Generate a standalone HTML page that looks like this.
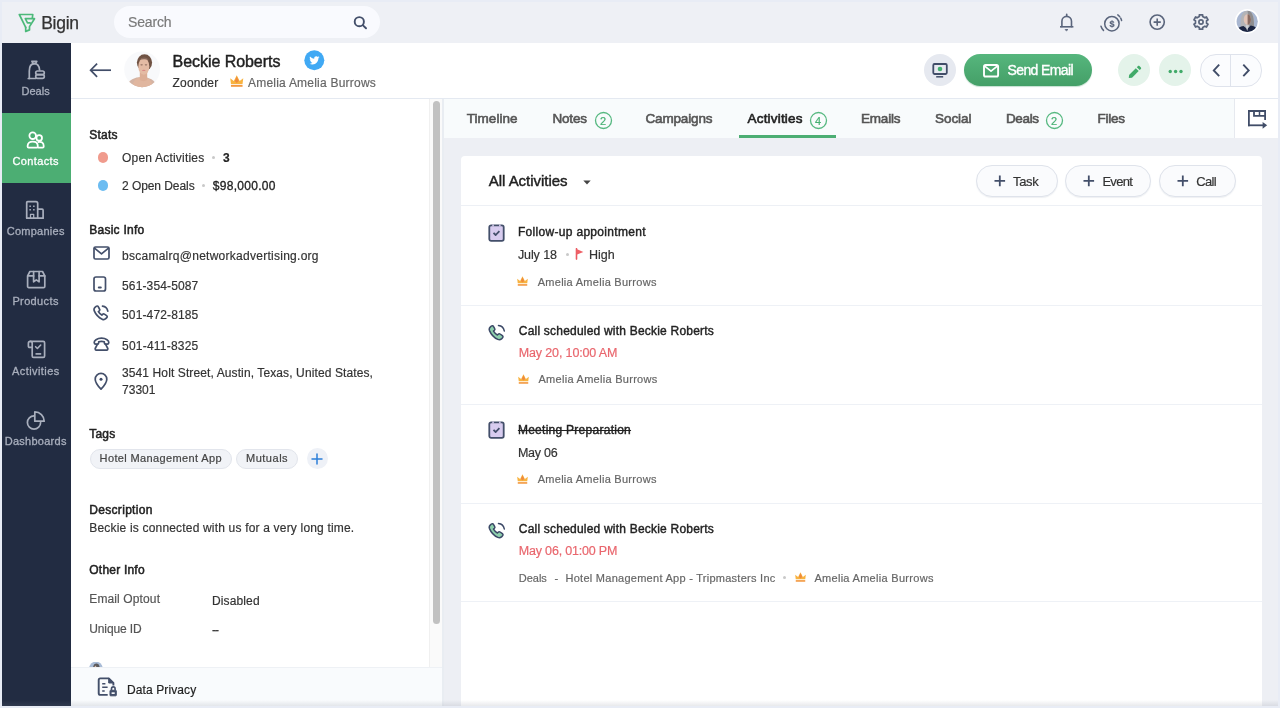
<!DOCTYPE html>
<html lang="en"><head><meta charset="utf-8"><title>Beckie Roberts - Bigin</title>
<style>
*{box-sizing:border-box;margin:0;padding:0}
html,body{width:1280px;height:708px;overflow:hidden}
body{background:#e8ecf5;font-family:"Liberation Sans",sans-serif;position:relative}
.a{position:absolute;display:block}
.t{position:absolute;white-space:nowrap;line-height:1;display:block}
#root{position:absolute;left:0;top:0;width:1280px;height:708px;will-change:transform}
</style></head><body><div id="root">
<div class="a" style="left:2px;top:2px;width:1276px;height:41px;background:#eef0f5"></div><svg class="a" style="left:17.500px;top:13px" width="18" height="20" viewBox="0 0 18 20" fill="none" stroke="#4cb97a" stroke-width="1.700" stroke-linejoin="round" stroke-linecap="round"><path d="M7.700 14.300L1.300 1.500h13.500l-.5 3.500"/><path d="M7.700 14.300v4.100l3.800-1.500v-3.300l5-7.900H7.300l2.200 4.200h2.600"/></svg><span class="t" id="t0" style="left:41.2px;top:15px;font-size:17.5px;font-weight:400;color:#333;letter-spacing:-0.280px;-webkit-text-stroke:0.25px #333;">Bigin</span><div class="a" style="left:114px;top:6px;width:266px;height:32px;border-radius:16px;background:#f9fafe"></div><span class="t" id="t1" style="left:128px;top:15px;font-size:14px;font-weight:400;color:#7a7a7a;letter-spacing:-0.172px;-webkit-text-stroke:0.18px #7a7a7a;">Search</span><svg class="a" style="left:352px;top:15px" width="16" height="16" viewBox="0 0 16 16" fill="none" stroke="#434f6a" stroke-width="1.900" stroke-linecap="round"><circle cx="7.300" cy="6.700" r="4.600"/><path d="M11 10.400l3 2.900"/></svg><svg class="a" style="left:1058px;top:13px" width="18" height="19" viewBox="0 0 18 19" fill="none" stroke="#5a657c" stroke-width="1.600" stroke-linecap="round" stroke-linejoin="round"><path d="M8.700 1.400v1.400"/><path d="M3.900 13.600V8.200a4.800 4.800 0 0 1 9.600 0v5.400"/><path d="M2 13.800h13.400" stroke-linecap="butt"/><path d="M7.600 16.600h2.200l-1.100 1z" fill="#5a657c" stroke-width="1"/></svg><svg class="a" style="left:1099px;top:11.500px" width="25" height="22" viewBox="0 0 25 22" fill="none" stroke="#5a657c" stroke-width="1.500" stroke-linecap="round" stroke-linejoin="round"><circle cx="12.900" cy="11.700" r="7.200"/><path d="M18.800 2.900c1.900 1.400 3.200 3.200 3.800 5.600" stroke-dasharray="2.600 1.800"/><path d="M2 14.200c.5 1.700 1.300 3 2.500 4.200"/></svg><span class="t" id="t2" style="left:1109.6px;top:20px;font-size:9px;font-weight:700;color:#5a657c;-webkit-text-stroke:0.18px #5a657c;">$</span><svg class="a" style="left:1148px;top:13px" width="18" height="18" viewBox="0 0 18 18" fill="none" stroke="#5a657c" stroke-width="1.600" stroke-linecap="butt"><circle cx="9.200" cy="9.100" r="7.100"/><path d="M9.200 5.500v7.200M5.600 9.100h7.200"/></svg><svg class="a" style="left:1191.700px;top:13.400px" width="18" height="18" viewBox="0 0 18 18" fill="none" stroke="#5a657c" stroke-width="1.700" stroke-linejoin="round"><path d="M10.66 1.79 L7.34 1.79 L7.33 3.55 L5.11 4.83 L3.59 3.95 L1.92 6.84 L3.45 7.72 L3.45 10.28 L1.92 11.16 L3.59 14.05 L5.11 13.17 L7.33 14.45 L7.34 16.21 L10.66 16.21 L10.67 14.45 L12.89 13.17 L14.41 14.05 L16.08 11.16 L14.55 10.28 L14.55 7.72 L16.08 6.84 L14.41 3.95 L12.89 4.83 L10.67 3.55Z"/><circle cx="9" cy="9" r="2.100"/></svg><svg class="a" style="left:1234px;top:8px" width="27" height="27" viewBox="0 0 27 27"><defs><clipPath id="cpu"><circle cx="13.200" cy="13.400" r="10.600"/></clipPath></defs><circle cx="13.200" cy="13.400" r="12.300" fill="#fff"/><g clip-path="url(#cpu)"><rect width="27" height="27" fill="#a8b6d0"/><path d="M6.800 22c-.8-8-.3-19 6.400-19.500 6.600-.3 7.400 10 6.600 19.500z" fill="#b4b4b6"/><path d="M13.500 2.500c5.800.3 7 9.500 6.300 19.500h-4z" fill="#8e8e90"/><path d="M9.800 10.500c.6-3 2-4.300 3.700-4.300 1.900 0 3.100 1.800 3.300 4.800.2 3-1.100 5.800-3.300 5.800s-4.100-2.800-3.700-6.300z" fill="#e2c4b6"/><path d="M13.600 6.200c1.900 0 3.100 1.800 3.300 4.800.2 3-1.100 5.800-3.300 5.800z" fill="#8a6c62"/><path d="M1 27c.5-6 4-8.600 8.500-9l3.700 3 3.500-3.400C21 18 25 21 25.500 27z" fill="#1c2642"/><path d="M11.600 17.200l1.600 6 1.500-6z" fill="#cfd2d6"/></g></svg><div class="a" style="left:2px;top:43px;width:69px;height:663px;background:#222c42"></div><div class="a" style="left:2px;top:43px;width:69px;height:70px;"></div><svg class="a" style="left:27px;top:60px" width="19" height="20" viewBox="0 0 19 20" fill="none" stroke="#a9afbd" stroke-width="1.7" stroke-linecap="round" stroke-linejoin="round"><path d="M4.9 1.3h4.900L8.500 3.700H6.200z"/><path d="M2.300 18.400V11c0-4.700 2.100-7.300 5.100-7.300 2.700 0 4.800 2.300 5.200 6.300"/><path d="M1.300 18.500h7.400"/><rect x="8.700" y="11" width="8.600" height="3.700" rx="1.850"/><rect x="8.700" y="14.700" width="8.600" height="3.700" rx="1.850"/></svg><span class="t" id="t3" style="left:21.4px;top:86px;font-size:11px;font-weight:400;color:#a9afbd;letter-spacing:0.044px;-webkit-text-stroke:0.3px #a9afbd;">Deals</span><div class="a" style="left:2px;top:113px;width:69px;height:70px;background:#4cae73;"></div><svg class="a" style="left:26px;top:131px" width="20" height="19" viewBox="0 0 20 19" fill="none" stroke="#ffffff" stroke-width="1.8" stroke-linecap="round" stroke-linejoin="round"><circle cx="13.200" cy="6.900" r="2.800"/><circle cx="6.700" cy="4.700" r="3.300" fill="#4cae73"/><path d="M12.600 11c2.800-.6 5.100.9 5.100 3.900v.7c0 .6-.4 1-1 1h-4.500"/><path d="M1.600 14.900c0-2.900 2.200-4.300 5.100-4.300s5.100 1.400 5.100 4.300v.7c0 .6-.4 1-1 1H2.600c-.6 0-1-.4-1-1z" fill="#4cae73"/></svg><span class="t" id="t4" style="left:12.5px;top:156px;font-size:11px;font-weight:400;color:#ffffff;letter-spacing:0.368px;-webkit-text-stroke:0.3px #ffffff;">Contacts</span><div class="a" style="left:2px;top:183px;width:69px;height:70px;"></div><svg class="a" style="left:25px;top:200px" width="20" height="20" viewBox="0 0 20 20" fill="none" stroke="#a9afbd" stroke-width="1.7" stroke-linecap="round" stroke-linejoin="round"><path d="M1.700 18.100V2.700c0-.6.400-1 1-1h8.300c1 0 1.700.7 1.700 1.700v14.700"/><path d="M12.700 9.200h4.400c.6 0 1 .4 1 1v7.900"/><path d="M1.700 18.100h16.400"/><path d="M5.500 18v-3.700h3.200V18" stroke-width="1.300"/><path d="M4.400 5.400h1.500v1.500H4.400zM8.100 5.400h1.500v1.500H8.100zM4.400 9h1.500v1.500H4.400zM8.100 9h1.500v1.500H8.100z" fill="#a9afbd" stroke="none"/></svg><span class="t" id="t5" style="left:6.8px;top:226px;font-size:11px;font-weight:400;color:#a9afbd;letter-spacing:0.245px;-webkit-text-stroke:0.3px #a9afbd;">Companies</span><div class="a" style="left:2px;top:253px;width:69px;height:70px;"></div><svg class="a" style="left:26px;top:269.5px" width="20" height="19" viewBox="0 0 20 19" fill="none" stroke="#a9afbd" stroke-width="1.7" stroke-linecap="round" stroke-linejoin="round"><path d="M1.600 5.900L3.900 1.500h12.600l2.300 4.400v10.500c0 .7-.5 1.200-1.200 1.200H2.800c-.7 0-1.200-.5-1.200-1.200z"/><path d="M1.800 5.900h5.800M13.100 5.900h5.600"/><path d="M7.600 1.700v10.100l2.700-1.900 2.800 1.900V1.700"/></svg><span class="t" id="t6" style="left:12.4px;top:296px;font-size:11px;font-weight:400;color:#a9afbd;letter-spacing:0.368px;-webkit-text-stroke:0.3px #a9afbd;">Products</span><div class="a" style="left:2px;top:323px;width:69px;height:70px;"></div><svg class="a" style="left:27px;top:340px" width="19" height="19" viewBox="0 0 19 19" fill="none" stroke="#a9afbd" stroke-width="1.7" stroke-linecap="round" stroke-linejoin="round"><path d="M3.200 1.400h13c.8 0 1.400.6 1.400 1.400V16c0 .8-.6 1.400-1.400 1.400H6.600c-.8 0-1.400-.6-1.400-1.400V7.400"/><path d="M3.300 1.400c1.100 0 1.900.8 1.900 1.900v4.100H2.600c-.7 0-1.200-.5-1.200-1.200V3.200c0-1 .8-1.800 1.900-1.800z"/><path d="M8.600 6.700l1.800 1.800L13.700 5" stroke-width="1.600"/><path d="M8.500 13.900h5.700" stroke-width="1.700" stroke-linecap="butt"/></svg><span class="t" id="t7" style="left:12px;top:366px;font-size:11px;font-weight:400;color:#a9afbd;letter-spacing:0.422px;-webkit-text-stroke:0.3px #a9afbd;">Activities</span><div class="a" style="left:2px;top:393px;width:69px;height:70px;"></div><svg class="a" style="left:26px;top:411px" width="20" height="20" viewBox="0 0 20 20" fill="none" stroke="#a9afbd" stroke-width="1.7" stroke-linecap="round" stroke-linejoin="round"><path d="M8 4.900A6.600 6.600 0 1 0 14.600 11.500"/><path d="M8.800 0.900V10.200H18.200A9.400 9.400 0 0 0 8.800 0.900z"/></svg><span class="t" id="t8" style="left:4.8px;top:436px;font-size:11px;font-weight:400;color:#a9afbd;letter-spacing:0.252px;-webkit-text-stroke:0.3px #a9afbd;">Dashboards</span><div class="a" style="left:71px;top:43px;width:1207px;height:56px;background:#fff;border-bottom:1px solid #e4e9f1"></div><svg class="a" style="left:89px;top:62px" width="24" height="16" viewBox="0 0 24 16" fill="none" stroke="#414d68" stroke-width="1.700" stroke-linecap="butt" stroke-linejoin="miter"><path d="M2 8.200h20"/><path d="M8.100 1.600L1.600 8.200l6.500 6.600"/></svg><svg class="a" style="left:124px;top:51px" width="37" height="37" viewBox="0 0 37 37"><defs><clipPath id="cpa"><circle cx="18.100" cy="18.300" r="17.900"/></clipPath></defs><circle cx="18.100" cy="18.300" r="17.900" fill="#f8f9fb"/><g clip-path="url(#cpa)"><ellipse cx="17.800" cy="34" rx="13.600" ry="8" fill="#d3b3a3"/><ellipse cx="18.500" cy="33.500" rx="9.500" ry="7.500" fill="#e0b69f"/><path d="M15.800 21h7.400v8c-2.500 1.500-5 1.500-7.400 0z" fill="#dcae96"/><ellipse cx="20.500" cy="11.600" rx="7.600" ry="8.400" fill="#6f5243"/><ellipse cx="19.800" cy="15.400" rx="5.500" ry="8.300" fill="#e4bba4"/><path d="M15 9.500c1.200-2 3-3 5.200-3 2.200 0 3.800 1 4.800 3-1.600-.8-3.200-1.200-4.900-1.200-1.800 0-3.500.4-5.100 1.200z" fill="#87685a"/><ellipse cx="17.600" cy="13.800" rx="1.300" ry=".6" fill="#8d6b5d"/><ellipse cx="22" cy="13.800" rx="1.300" ry=".6" fill="#8d6b5d"/><ellipse cx="19.800" cy="19.400" rx="1.700" ry=".7" fill="#d98a86"/></g></svg><span class="t" id="t9" style="left:172.6px;top:54px;font-size:16px;font-weight:400;color:#1f1f1f;letter-spacing:-0.054px;-webkit-text-stroke:0.45px #1f1f1f;">Beckie Roberts</span><svg class="a" style="left:303.700px;top:50.400px" width="21" height="21" viewBox="0 0 21 21"><circle cx="10.300" cy="10.200" r="10" fill="#40a9f4"/><path transform="translate(0.900 0.700) scale(0.910)" d="M16 7.100c-.4.200-.9.300-1.300.4.500-.3.800-.7 1-1.300-.4.300-.9.400-1.500.6-.4-.5-1-.7-1.700-.7-1.300 0-2.300 1-2.300 2.300 0 .2 0 .4.100.5-1.900-.1-3.600-1-4.700-2.400-.2.300-.3.700-.3 1.200 0 .8.400 1.500 1 1.900-.4 0-.7-.1-1-.3 0 1.100.8 2 1.800 2.300-.3.100-.7.100-1 0 .3.900 1.100 1.600 2.100 1.600-1 .8-2.100 1.100-3.400 1 1 .7 2.200 1 3.500 1 4.200 0 6.500-3.500 6.500-6.500v-.3c.5-.3.900-.7 1.200-1.300z" fill="#fff"/></svg><span class="t" id="t10" style="left:172.6px;top:77px;font-size:12px;font-weight:400;color:#333;letter-spacing:0.149px;-webkit-text-stroke:0.18px #333;">Zoonder</span><svg class="a" style="left:230px;top:75px" width="13.5" height="12" viewBox="0 0 13 11.600"><path d="M0.900 8.600L0.200 3.100 3.700 5.700 6.500 0.200 9.300 5.700 12.800 3.100 12.100 8.600z" fill="#f8b340"/><path d="M6.500 1.400L8.500 5.700 6.500 7.700 4.500 5.700z" fill="#ef8b3c"/><rect x="0.900" y="9.500" width="11.200" height="1.900" fill="#f3983f"/></svg><span class="t" id="t11" style="left:248px;top:77px;font-size:12px;font-weight:400;color:#666;letter-spacing:0.221px;-webkit-text-stroke:0.18px #666;">Amelia Amelia Burrows</span><div class="a" style="left:923.800px;top:54.200px;width:32px;height:32px;border-radius:16px;background:#e6e9f0"></div><svg class="a" style="left:931px;top:62px" width="18" height="17" viewBox="0 0 18 17" fill="none" stroke="#414d68" stroke-width="1.800"><rect x="2.300" y="2" width="13.500" height="10" rx="1.200"/><path d="M5.200 14.800h7"  stroke-width="1.500"/><circle cx="9" cy="7" r="2.300" fill="#43b06f" stroke="none"/></svg><div class="a" style="left:964px;top:54px;width:128px;height:32px;border-radius:16px;background:linear-gradient(#56b67d,#449f67);box-shadow:0 1px 1px rgba(60,150,100,.3)"></div><svg class="a" style="left:982px;top:63px" width="18" height="16" viewBox="0 0 18 16" fill="none" stroke="#fff" stroke-width="1.900" stroke-linejoin="round" stroke-linecap="round"><rect x="2" y="2" width="14.100" height="11.500" rx="1.600"/><path d="M3 3.400L9 8.200l6-4.800" stroke-width="1.700"/></svg><span class="t" id="t12" style="left:1007.5px;top:63px;font-size:14px;font-weight:400;color:#fff;letter-spacing:-0.610px;-webkit-text-stroke:0.35px #fff;">Send Email</span><div class="a" style="left:1118px;top:54.200px;width:32px;height:32px;border-radius:16px;background:#e4f3ea"></div><svg class="a" style="left:1128px;top:65px" width="14" height="14" viewBox="0 0 14 14"><path d="M0.800 12.900l.3-3 6.700-6.700 2.900 2.900-6.700 6.700z" fill="#41aa69"/><path d="M8.800 2.200l1.200-1.200c.4-.4 1-.4 1.400 0l1.500 1.500c.4.400.4 1 0 1.400l-1.200 1.200z" fill="#41aa69"/></svg><div class="a" style="left:1159px;top:54.200px;width:32px;height:32px;border-radius:16px;background:#e4f3ea"></div><svg class="a" style="left:1167px;top:69px" width="17" height="5" viewBox="0 0 17 5" fill="#41aa69"><circle cx="3.250" cy="2.500" r="1.700"/><circle cx="8.600" cy="2.500" r="1.700"/><circle cx="14" cy="2.500" r="1.700"/></svg><div class="a" style="left:1200px;top:54px;width:62px;height:32.500px;border-radius:16px;background:#fbfcfe;border:1px solid #dfe3ec"></div><div class="a" style="left:1230px;top:55px;width:1px;height:30.500px;background:#dfe3ec"></div><svg class="a" style="left:1211px;top:63px" width="10" height="15" viewBox="0 0 10 15" fill="none" stroke="#414d68" stroke-width="1.900" stroke-linecap="butt" stroke-linejoin="miter"><path d="M8.200 1.700L2.800 7.400l5.400 5.700"/></svg><svg class="a" style="left:1241px;top:63px" width="10" height="15" viewBox="0 0 10 15" fill="none" stroke="#414d68" stroke-width="1.900" stroke-linecap="butt" stroke-linejoin="miter"><path d="M2.300 1.700L7.700 7.400l-5.400 5.700"/></svg><div class="a" style="left:71px;top:99px;width:358px;height:607px;background:#fff"></div><div class="a" style="left:429px;top:99px;width:13px;height:607px;background:#fafafa;border-left:1px solid #f0f0f0"></div><div class="a" style="left:433px;top:101px;width:7px;height:523px;border-radius:4px;background:#c1c1c1"></div><div class="a" style="left:442px;top:99px;width:2px;height:607px;background:#e9edf2"></div><span class="t" id="t13" style="left:89.3px;top:129px;font-size:12px;font-weight:400;color:#222;letter-spacing:0.210px;-webkit-text-stroke:0.5px #222;">Stats</span><div class="a" style="left:97.600px;top:152.300px;width:10.500px;height:10.500px;border-radius:50%;background:#f09b8d"></div><span class="t" id="t14" style="left:122px;top:152px;font-size:12px;font-weight:400;color:#333;letter-spacing:0.202px;-webkit-text-stroke:0.18px #333;">Open Activities</span><div class="a" style="left:212px;top:155.800px;width:3px;height:3px;border-radius:50%;background:#c9c9c9"></div><span class="t" id="t15" style="left:223px;top:152px;font-size:12px;font-weight:700;color:#222;letter-spacing:-0.287px;-webkit-text-stroke:0.18px #222;">3</span><div class="a" style="left:97.600px;top:180px;width:10.500px;height:10.500px;border-radius:50%;background:#6cbcf1"></div><span class="t" id="t16" style="left:122px;top:180px;font-size:12px;font-weight:400;color:#333;letter-spacing:-0.063px;-webkit-text-stroke:0.18px #333;">2 Open Deals</span><div class="a" style="left:202px;top:184px;width:3px;height:3px;border-radius:50%;background:#c9c9c9"></div><span class="t" id="t17" style="left:212.8px;top:180px;font-size:12px;font-weight:400;color:#222;letter-spacing:0.293px;-webkit-text-stroke:0.3px #222;">$98,000.00</span><span class="t" id="t18" style="left:89.3px;top:224px;font-size:12px;font-weight:400;color:#222;letter-spacing:0.244px;-webkit-text-stroke:0.5px #222;">Basic Info</span><svg class="a" style="left:92.5px;top:246px" width="17" height="14" viewBox="0 0 17 14" fill="none" stroke="#434f6a" stroke-width="1.7" stroke-linecap="round" stroke-linejoin="round"><rect x="1" y="1" width="15" height="12" rx="1.500"/><path d="M1.500 2.200L8.500 7.800l7-5.600"/></svg><span class="t" id="t19" style="left:122px;top:250px;font-size:12px;font-weight:400;color:#333;letter-spacing:0.266px;-webkit-text-stroke:0.18px #333;">bscamalrq@networkadvertising.org</span><svg class="a" style="left:92.5px;top:276px" width="14" height="16" viewBox="0 0 14 16" fill="none" stroke="#434f6a" stroke-width="1.7" stroke-linecap="round" stroke-linejoin="round"><rect x="1" y="1" width="11.500" height="14" rx="2"/><path d="M5.800 11.600h2" stroke-width="2"/></svg><span class="t" id="t20" style="left:122px;top:280px;font-size:12px;font-weight:400;color:#333;letter-spacing:0.142px;-webkit-text-stroke:0.18px #333;">561-354-5087</span><svg class="a" style="left:92.5px;top:305px" width="17" height="16" viewBox="0 0 17 16" fill="none" stroke="#434f6a" stroke-width="1.7" stroke-linecap="round" stroke-linejoin="round"><path d="M5.200 1.600c-.5-.7-1.400-.8-2-.3L2 2.400C1 3.300.8 4.600 1.300 5.900c1.500 3.700 4.300 6.600 7.900 8.300 1.200.6 2.600.4 3.500-.5l1.100-1.100c.6-.6.500-1.500-.2-2l-2.200-1.500c-.6-.4-1.300-.300-1.800.2l-.8.800C7.400 9.300 6.200 8 5.400 6.600l.9-.8c.5-.5.600-1.200.2-1.800z"/><path d="M9.500 1.200c2.700.3 4.800 2.300 5.300 5"/></svg><span class="t" id="t21" style="left:122px;top:309px;font-size:12px;font-weight:400;color:#333;letter-spacing:0.142px;-webkit-text-stroke:0.18px #333;">501-472-8185</span><svg class="a" style="left:92.5px;top:336.5px" width="17" height="14.5" viewBox="0 0 17 14.500" fill="none" stroke="#434f6a" stroke-width="1.7" stroke-linecap="round" stroke-linejoin="round"><path d="M1.200 5.600C1 3.800 3.800 1.200 8.500 1.200s7.500 2.600 7.300 4.400c-.1.900-.7 1.500-1.500 1.500h-1.600c-.8 0-1.400-.6-1.400-1.400v-1c-1.800-.5-3.800-.5-5.600 0v1c0 .8-.6 1.400-1.400 1.400H2.700c-.8 0-1.400-.6-1.500-1.500z"/><path d="M4.500 7.200L2.200 11.500v.5c0 .7.500 1.200 1.200 1.200h10.200c.7 0 1.200-.5 1.200-1.200v-.5L12.500 7.200"/></svg><span class="t" id="t22" style="left:122px;top:340px;font-size:12px;font-weight:400;color:#333;letter-spacing:0.223px;-webkit-text-stroke:0.18px #333;">501-411-8325</span><svg class="a" style="left:93.5px;top:371.5px" width="14" height="18.5" viewBox="0 0 14 18.500" fill="none" stroke="#434f6a" stroke-width="1.7" stroke-linecap="round" stroke-linejoin="round"><path d="M7 17.200C3.500 13.500 1.200 10.300 1.200 7.200a5.800 5.800 0 0 1 11.600 0c0 3.100-2.300 6.300-5.800 10z"/><circle cx="7" cy="7.200" r="1.500" fill="#3b4866" stroke="none"/></svg><span class="t" id="t23" style="left:122px;top:367px;font-size:12px;font-weight:400;color:#333;letter-spacing:0.108px;-webkit-text-stroke:0.18px #333;">3541 Holt Street, Austin, Texas, United States,</span><span class="t" id="t24" style="left:122px;top:384px;font-size:12px;font-weight:400;color:#333;letter-spacing:0.031px;-webkit-text-stroke:0.18px #333;">73301</span><span class="t" id="t25" style="left:89.3px;top:428px;font-size:12px;font-weight:400;color:#222;letter-spacing:0.180px;-webkit-text-stroke:0.5px #222;">Tags</span><div class="a" style="left:89.700px;top:449px;width:142.200px;height:19.500px;border-radius:10px;background:#f1f3f7;border:1px solid #e2e5ec"></div><span class="t" id="t26" style="left:99.6px;top:453px;font-size:11px;font-weight:400;color:#444;letter-spacing:0.370px;-webkit-text-stroke:0.2px #444;">Hotel Management App</span><div class="a" style="left:236.200px;top:449px;width:62px;height:19.500px;border-radius:10px;background:#f1f3f7;border:1px solid #e2e5ec"></div><span class="t" id="t27" style="left:246px;top:453px;font-size:11px;font-weight:400;color:#444;letter-spacing:0.511px;-webkit-text-stroke:0.2px #444;">Mutuals</span><div class="a" style="left:306.500px;top:448px;width:21px;height:21px;border-radius:50%;background:#eef1f7"></div><svg class="a" style="left:311px;top:452.500px" width="12" height="12" viewBox="0 0 12 12" fill="none" stroke="#2d7fd9" stroke-width="1.500" stroke-linecap="round"><path d="M6 1v10M1 6h10"/></svg><span class="t" id="t28" style="left:89.3px;top:504px;font-size:12px;font-weight:400;color:#222;letter-spacing:0.307px;-webkit-text-stroke:0.5px #222;">Description</span><span class="t" id="t29" style="left:89.3px;top:522px;font-size:12px;font-weight:400;color:#333;letter-spacing:0.183px;-webkit-text-stroke:0.18px #333;">Beckie is connected with us for a very long time.</span><span class="t" id="t30" style="left:89.3px;top:564px;font-size:12px;font-weight:400;color:#222;letter-spacing:0.214px;-webkit-text-stroke:0.5px #222;">Other Info</span><span class="t" id="t31" style="left:89.3px;top:593px;font-size:12px;font-weight:400;color:#555;letter-spacing:0.120px;-webkit-text-stroke:0.18px #555;">Email Optout</span><span class="t" id="t32" style="left:212px;top:595px;font-size:12px;font-weight:400;color:#333;letter-spacing:0.128px;-webkit-text-stroke:0.18px #333;">Disabled</span><span class="t" id="t33" style="left:89.3px;top:623px;font-size:12px;font-weight:400;color:#555;letter-spacing:-0.134px;-webkit-text-stroke:0.18px #555;">Unique ID</span><span class="t" id="t34" style="left:212px;top:624px;font-size:12px;font-weight:400;color:#333;letter-spacing:-1.000px;-webkit-text-stroke:0.18px #333;">--</span><svg class="a" style="left:87px;top:662px" width="18" height="5" viewBox="0 0 18 6"><path d="M0.800 6.500a8.200 8.200 0 0 1 16.200 0z" fill="#a9bcd7"/><path d="M5.500 6.500c.3-3 2-4.600 4-4.600s3.600 1.600 3.900 4.600z" fill="#5c5a5c"/><path d="M7 6.500c.2-1.200 1-2 2.200-2v2z" fill="#d9b8a8"/></svg><div class="a" style="left:71px;top:667px;width:371px;height:39px;background:#f9fbfd;border-top:1px solid #eef1f5"></div><svg class="a" style="left:95.700px;top:676px" width="22" height="22" viewBox="0 0 22 22" fill="none" stroke="#434f6a" stroke-width="1.900" stroke-linejoin="round"><path d="M11.700 18.900H4.300c-.9 0-1.600-.7-1.600-1.600V4c0-.9.700-1.600 1.600-1.600h8.500l4.600 4.500v2.500"/><path d="M12.700 2.400l4.700 4.600h-4.700z" fill="#434f6a" stroke-width="1"/><path d="M6.200 7.700h3.200M6.200 11.200h5.400M6.200 15h2.500" stroke-width="1.500"/><rect x="14" y="14.300" width="6.300" height="5.500" rx=".6" fill="#434f6a" stroke-width="1"/><path d="M15.500 14v-1.300a1.800 1.800 0 0 1 3.600 0V14" stroke-width="1.600"/><rect x="15.600" y="16.300" width="3.100" height="1.700" fill="#f4f6f9" stroke="none"/></svg><span class="t" id="t35" style="left:127px;top:684px;font-size:12px;font-weight:400;color:#222;letter-spacing:0.106px;-webkit-text-stroke:0.18px #222;">Data Privacy</span><div class="a" style="left:444px;top:99px;width:834px;height:39px;background:#f8fbfc"></div><div class="a" style="left:444px;top:138px;width:834px;height:568px;background:#edeff4"></div><span class="t" id="t36" style="left:466.8px;top:112px;font-size:13.5px;font-weight:400;color:#555;letter-spacing:0.026px;-webkit-text-stroke:0.6px #555;">Timeline</span><span class="t" id="t37" style="left:552.5px;top:112px;font-size:13.5px;font-weight:400;color:#555;letter-spacing:-0.195px;-webkit-text-stroke:0.6px #555;">Notes</span><svg class="a" style="left:593.5px;top:110.800px" width="19" height="19" viewBox="0 0 19 19"><circle cx="9.500" cy="9.500" r="8" fill="none" stroke="#57b981" stroke-width="1.300"/></svg><span class="t" id="t38" style="left:600px;top:116px;font-size:11px;font-weight:400;color:#46b072;letter-spacing:0.075px;-webkit-text-stroke:0.2px #46b072;">2</span><span class="t" id="t39" style="left:645.5px;top:112px;font-size:13.5px;font-weight:400;color:#555;letter-spacing:-0.162px;-webkit-text-stroke:0.6px #555;">Campaigns</span><span class="t" id="t40" style="left:747.5px;top:112px;font-size:13.5px;font-weight:400;color:#222;letter-spacing:0.193px;-webkit-text-stroke:0.6px #222;">Activities</span><svg class="a" style="left:808.5px;top:110.800px" width="19" height="19" viewBox="0 0 19 19"><circle cx="9.500" cy="9.500" r="8" fill="none" stroke="#57b981" stroke-width="1.300"/></svg><span class="t" id="t41" style="left:815px;top:116px;font-size:11px;font-weight:400;color:#46b072;letter-spacing:0.075px;-webkit-text-stroke:0.2px #46b072;">4</span><div class="a" style="left:739px;top:135px;width:96.500px;height:3px;background:#4cae73"></div><span class="t" id="t42" style="left:861px;top:112px;font-size:13.5px;font-weight:400;color:#555;letter-spacing:-0.203px;-webkit-text-stroke:0.6px #555;">Emails</span><span class="t" id="t43" style="left:935px;top:112px;font-size:13.5px;font-weight:400;color:#555;letter-spacing:-0.056px;-webkit-text-stroke:0.6px #555;">Social</span><span class="t" id="t44" style="left:1006px;top:112px;font-size:13.5px;font-weight:400;color:#555;letter-spacing:-0.379px;-webkit-text-stroke:0.6px #555;">Deals</span><svg class="a" style="left:1044.5px;top:110.800px" width="19" height="19" viewBox="0 0 19 19"><circle cx="9.500" cy="9.500" r="8" fill="none" stroke="#57b981" stroke-width="1.300"/></svg><span class="t" id="t45" style="left:1051px;top:116px;font-size:11px;font-weight:400;color:#46b072;letter-spacing:0.075px;-webkit-text-stroke:0.2px #46b072;">2</span><span class="t" id="t46" style="left:1097.5px;top:112px;font-size:13.5px;font-weight:400;color:#555;letter-spacing:-0.254px;-webkit-text-stroke:0.6px #555;">Files</span><div class="a" style="left:1234px;top:99px;width:44px;height:39px;background:#fff;border-left:1px solid #e6e9ef"></div><svg class="a" style="left:1247px;top:109px" width="21" height="21" viewBox="0 0 21 21" fill="none" stroke="#414d68" stroke-width="1.800" stroke-linejoin="miter" stroke-linecap="butt"><path d="M1.900 17.200V2h16.200v9"/><path d="M7 2v4.800h11"/><path d="M12.500 2v4.800" stroke-width="1.500"/><path d="M1 16.300h15"/><path d="M15.600 12.900l4.600 3.400-4.600 3.400z" fill="#414d68" stroke="none"/></svg><div class="a" style="left:461px;top:156px;width:801px;height:550px;background:#fff;border-radius:4px 4px 0 0"></div><span class="t" id="t47" style="left:488.8px;top:173px;font-size:15px;font-weight:400;color:#222;letter-spacing:-0.039px;-webkit-text-stroke:0.45px #222;">All Activities</span><svg class="a" style="left:583px;top:180px" width="8" height="5" viewBox="0 0 8 5"><path d="M0.300 0.500h7.400L4 4.500z" fill="#444"/></svg><div class="a" style="left:976px;top:164.500px;width:81.5px;height:32px;border-radius:16px;background:#fafbfd;border:1px solid #dfe3eb;box-shadow:0 1px 1px rgba(200,205,215,.3)"></div><svg class="a" style="left:994px;top:175px" width="12" height="12" viewBox="0 0 12 12" fill="none" stroke="#434f6a" stroke-width="1.800" stroke-linecap="butt"><path d="M5.800 0.600v10.600M0.500 5.900h10.600"/></svg><span class="t" id="t48" style="left:1013px;top:175px;font-size:13px;font-weight:400;color:#333;letter-spacing:-0.311px;-webkit-text-stroke:0.18px #333;">Task</span><div class="a" style="left:1065px;top:164.500px;width:86px;height:32px;border-radius:16px;background:#fafbfd;border:1px solid #dfe3eb;box-shadow:0 1px 1px rgba(200,205,215,.3)"></div><svg class="a" style="left:1083px;top:175px" width="12" height="12" viewBox="0 0 12 12" fill="none" stroke="#434f6a" stroke-width="1.800" stroke-linecap="butt"><path d="M5.800 0.600v10.600M0.500 5.900h10.600"/></svg><span class="t" id="t49" style="left:1102.4px;top:175px;font-size:13px;font-weight:400;color:#333;letter-spacing:-0.713px;-webkit-text-stroke:0.18px #333;">Event</span><div class="a" style="left:1159px;top:164.500px;width:76.5px;height:32px;border-radius:16px;background:#fafbfd;border:1px solid #dfe3eb;box-shadow:0 1px 1px rgba(200,205,215,.3)"></div><svg class="a" style="left:1177px;top:175px" width="12" height="12" viewBox="0 0 12 12" fill="none" stroke="#434f6a" stroke-width="1.800" stroke-linecap="butt"><path d="M5.800 0.600v10.600M0.500 5.900h10.600"/></svg><span class="t" id="t50" style="left:1196.2px;top:175px;font-size:13px;font-weight:400;color:#333;letter-spacing:-0.669px;-webkit-text-stroke:0.18px #333;">Call</span><div class="a" style="left:461px;top:205px;width:801px;height:1px;background:#edf0f5"></div><div class="a" style="left:461px;top:305px;width:801px;height:1px;background:#eef1f6"></div><div class="a" style="left:461px;top:404px;width:801px;height:1px;background:#eef1f6"></div><div class="a" style="left:461px;top:503px;width:801px;height:1px;background:#eef1f6"></div><div class="a" style="left:461px;top:601px;width:801px;height:1px;background:#eef1f6"></div><svg class="a" style="left:487.9px;top:223.6px" width="18" height="19" viewBox="0 0 18 19"><rect x="1.300" y="1.400" width="14.400" height="15.500" rx="1.800" fill="#d8ccef" stroke="#434f6a" stroke-width="1.800"/><path d="M4.300 1.400h1.500M11.100 1.400h1.500" stroke="#d8ccef" stroke-width="2"/><path d="M5.500 8.800l2.200 2.200 3.700-3.900" fill="none" stroke="#434f6a" stroke-width="1.800" stroke-linejoin="round"/></svg><span class="t" id="t51" style="left:517.9px;top:226px;font-size:12px;font-weight:400;color:#222;letter-spacing:0.315px;-webkit-text-stroke:0.4px #222;">Follow-up appointment</span><span class="t" id="t52" style="left:517.9px;top:249px;font-size:12.5px;font-weight:400;color:#333;letter-spacing:-0.085px;-webkit-text-stroke:0.18px #333;">July 18</span><div class="a" style="left:565.500px;top:252.600px;width:3px;height:3px;border-radius:50%;background:#c9c9c9"></div><svg class="a" style="left:575px;top:248px" width="10" height="12" viewBox="0 0 10 12"><path d="M1.500 0.700v10.400" stroke="#ea5a62" stroke-width="1.600" stroke-linecap="round"/><path d="M1.500 1L8.400 3.900 1.500 6.800z" fill="#ee6067"/></svg><span class="t" id="t53" style="left:589px;top:249px;font-size:12.5px;font-weight:400;color:#333;letter-spacing:-0.040px;-webkit-text-stroke:0.18px #333;">High</span><svg class="a" style="left:517.3px;top:275.8px" width="11" height="10" viewBox="0 0 13 11.600"><path d="M0.900 8.600L0.200 3.100 3.700 5.700 6.500 0.200 9.300 5.700 12.800 3.100 12.100 8.600z" fill="#f8b340"/><path d="M6.500 1.400L8.500 5.700 6.500 7.700 4.500 5.700z" fill="#ef8b3c"/><rect x="0.900" y="9.500" width="11.200" height="1.900" fill="#f3983f"/></svg><span class="t" id="t54" style="left:537.7px;top:277px;font-size:11px;font-weight:400;color:#666;letter-spacing:0.280px;-webkit-text-stroke:0.18px #666;">Amelia Amelia Burrows</span><svg class="a" style="left:487.5px;top:323.5px" width="18" height="18" viewBox="0 0 18 18" fill="none" stroke="#3b4866" stroke-width="1.500" stroke-linecap="round" stroke-linejoin="round"><path d="M5.400 2.300c-.5-.7-1.400-.8-2-.3L2.200 3.100C1.200 4 1 5.300 1.500 6.600c1.600 3.900 4.500 7 8.300 8.800 1.300.6 2.700.4 3.700-.5l1.100-1.200c.6-.6.500-1.600-.2-2.100l-2.300-1.600c-.6-.4-1.400-.3-1.900.2l-.8.800c-1.700-1-3-2.400-3.900-3.900l.9-.8c.5-.5.600-1.300.2-1.900z" fill="#8ed0ad"/><path d="M10.500 1.500c3 .3 5.300 2.500 5.800 5.500"/></svg><span class="t" id="t55" style="left:518.8px;top:325px;font-size:12px;font-weight:400;color:#222;letter-spacing:0.209px;-webkit-text-stroke:0.4px #222;">Call scheduled with Beckie Roberts</span><span class="t" id="t56" style="left:518.8px;top:347px;font-size:12.5px;font-weight:400;color:#e9666d;letter-spacing:-0.144px;-webkit-text-stroke:0.18px #e9666d;">May 20, 10:00 AM</span><svg class="a" style="left:518.2px;top:373.8px" width="11" height="10" viewBox="0 0 13 11.600"><path d="M0.900 8.600L0.200 3.100 3.700 5.700 6.500 0.200 9.300 5.700 12.800 3.100 12.100 8.600z" fill="#f8b340"/><path d="M6.500 1.400L8.500 5.700 6.500 7.700 4.500 5.700z" fill="#ef8b3c"/><rect x="0.900" y="9.500" width="11.200" height="1.900" fill="#f3983f"/></svg><span class="t" id="t57" style="left:538.5px;top:374px;font-size:11px;font-weight:400;color:#666;letter-spacing:0.280px;-webkit-text-stroke:0.18px #666;">Amelia Amelia Burrows</span><svg class="a" style="left:487.9px;top:421.2px" width="18" height="19" viewBox="0 0 18 19"><rect x="1.300" y="1.400" width="14.400" height="15.500" rx="1.800" fill="#d8ccef" stroke="#434f6a" stroke-width="1.800"/><path d="M4.300 1.400h1.500M11.100 1.400h1.500" stroke="#d8ccef" stroke-width="2"/><path d="M5.500 8.800l2.200 2.200 3.700-3.900" fill="none" stroke="#434f6a" stroke-width="1.800" stroke-linejoin="round"/></svg><span class="t" id="t58" style="left:517.9px;top:424px;font-size:12px;font-weight:400;color:#222;letter-spacing:0.268px;-webkit-text-stroke:0.4px #222;text-decoration:line-through;">Meeting Preparation</span><span class="t" id="t59" style="left:517.9px;top:447px;font-size:12.5px;font-weight:400;color:#333;letter-spacing:-0.240px;-webkit-text-stroke:0.18px #333;">May 06</span><svg class="a" style="left:517.3px;top:473.8px" width="11" height="10" viewBox="0 0 13 11.600"><path d="M0.900 8.600L0.200 3.100 3.700 5.700 6.500 0.200 9.300 5.700 12.800 3.100 12.100 8.600z" fill="#f8b340"/><path d="M6.500 1.400L8.500 5.700 6.500 7.700 4.500 5.700z" fill="#ef8b3c"/><rect x="0.900" y="9.500" width="11.200" height="1.900" fill="#f3983f"/></svg><span class="t" id="t60" style="left:537.7px;top:474px;font-size:11px;font-weight:400;color:#666;letter-spacing:0.280px;-webkit-text-stroke:0.18px #666;">Amelia Amelia Burrows</span><svg class="a" style="left:487.5px;top:521.5px" width="18" height="18" viewBox="0 0 18 18" fill="none" stroke="#3b4866" stroke-width="1.500" stroke-linecap="round" stroke-linejoin="round"><path d="M5.400 2.300c-.5-.7-1.400-.8-2-.3L2.200 3.100C1.200 4 1 5.300 1.500 6.600c1.600 3.900 4.500 7 8.300 8.800 1.300.6 2.700.4 3.700-.5l1.100-1.200c.6-.6.500-1.600-.2-2.100l-2.300-1.600c-.6-.4-1.400-.3-1.900.2l-.8.800c-1.700-1-3-2.400-3.900-3.900l.9-.8c.5-.5.600-1.300.2-1.900z" fill="#8ed0ad"/><path d="M10.500 1.500c3 .3 5.300 2.500 5.800 5.500"/></svg><span class="t" id="t61" style="left:518.8px;top:523px;font-size:12px;font-weight:400;color:#222;letter-spacing:0.209px;-webkit-text-stroke:0.4px #222;">Call scheduled with Beckie Roberts</span><span class="t" id="t62" style="left:518.8px;top:545px;font-size:12.5px;font-weight:400;color:#e9666d;letter-spacing:-0.190px;-webkit-text-stroke:0.18px #e9666d;">May 06, 01:00 PM</span><span class="t" id="t63" style="left:518.8px;top:573px;font-size:11px;font-weight:400;color:#666;letter-spacing:-0.031px;-webkit-text-stroke:0.18px #666;">Deals</span><span class="t" id="t64" style="left:554.6px;top:573px;font-size:11px;font-weight:400;color:#666;letter-spacing:-0.472px;-webkit-text-stroke:0.18px #666;">-</span><span class="t" id="t65" style="left:565.5px;top:573px;font-size:11px;font-weight:400;color:#666;letter-spacing:0.267px;-webkit-text-stroke:0.18px #666;">Hotel Management App - Tripmasters Inc</span><div class="a" style="left:782.700px;top:575.500px;width:3px;height:3px;border-radius:50%;background:#c9c9c9"></div><svg class="a" style="left:794.6px;top:571.8px" width="11" height="10" viewBox="0 0 13 11.600"><path d="M0.900 8.600L0.200 3.100 3.700 5.700 6.500 0.200 9.300 5.700 12.800 3.100 12.100 8.600z" fill="#f8b340"/><path d="M6.500 1.400L8.500 5.700 6.500 7.700 4.500 5.700z" fill="#ef8b3c"/><rect x="0.900" y="9.500" width="11.200" height="1.900" fill="#f3983f"/></svg><span class="t" id="t66" style="left:814.4px;top:573px;font-size:11px;font-weight:400;color:#666;letter-spacing:0.295px;-webkit-text-stroke:0.18px #666;">Amelia Amelia Burrows</span><div class="a" style="left:2px;top:700px;width:1276px;height:6px;background:linear-gradient(rgba(120,125,140,0),rgba(120,125,140,.17))"></div></div></body></html>
